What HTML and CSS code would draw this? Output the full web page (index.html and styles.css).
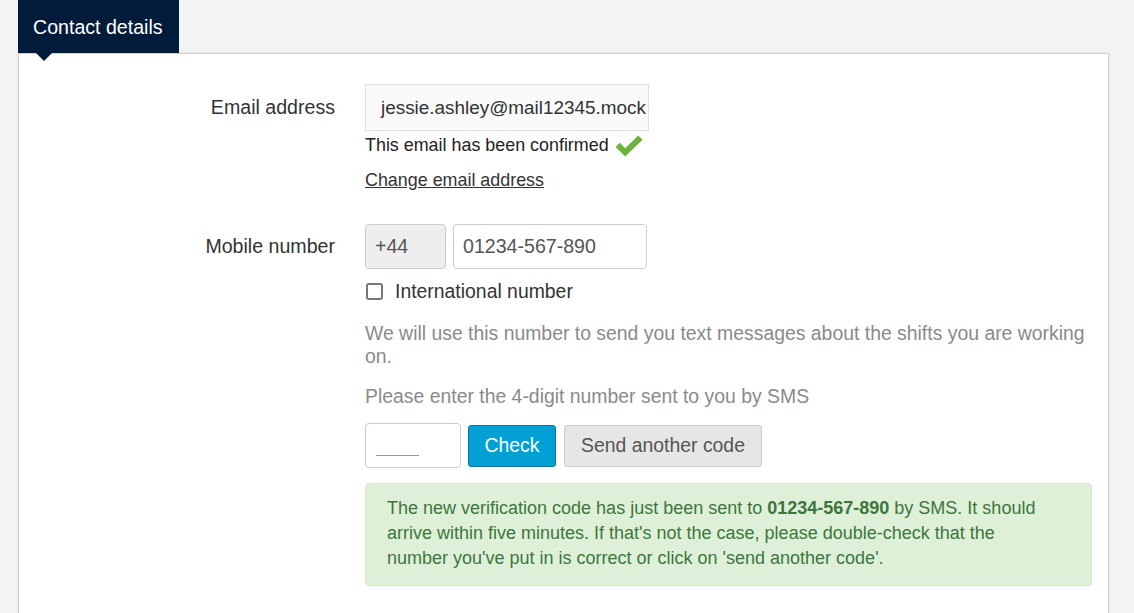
FILE: index.html
```html
<!DOCTYPE html>
<html>
<head>
<meta charset="utf-8">
<link rel="stylesheet" href="styles.css">
</head>
<body>
<div class="page">
  <div class="tabs">
    <div class="tab">Contact details</div>
  </div>
  <div class="panel">
    <div class="form">
      <div class="label label-email">Email address</div>
      <div class="field">
        <div class="readonly">jessie.ashley@mail12345.mock</div>
        <div class="confirmed">This email has been confirmed
          <svg class="check" width="28" height="22" viewBox="0 0 28 22"><path d="M0.5 12 L4.8 7.8 L10.2 13.2 L23.2 0.5 L27.5 4.8 L10.2 21.5 Z" fill="#6cb33e"/></svg>
        </div>
        <a class="change" href="#">Change email address</a>
      </div>

      <div class="label label-mobile">Mobile number</div>
      <div class="field">
        <div class="phone-row">
          <div class="prefix">+44</div>
          <div class="phone">01234-567-890</div>
        </div>
        <label class="intl"><span class="box"></span>International number</label>
        <p class="help">We will use this number to send you text messages about the shifts you are working on.</p>
        <p class="help help-sms">Please enter the 4-digit number sent to you by SMS</p>
        <div class="code-row">
          <div class="code"><span class="placeholder"></span></div>
          <button class="btn btn-primary">Check</button>
          <button class="btn btn-default">Send another code</button>
        </div>
        <div class="alert">The new verification code has just been sent to <b>01234-567-890</b> by SMS. It should arrive within five minutes. If that's not the case, please double-check that the number you've put in is correct or click on 'send another code'.</div>
      </div>
    </div>
  </div>
</div>
</body>
</html>
```

FILE: styles.css
```css
html, body {
  margin: 0;
  padding: 0;
  background: #f2f3f5;
  font-family: "Liberation Sans", Arial, sans-serif;
  color: #333;
  height: 100%;
  overflow: hidden;
}
.page {
  padding-left: 18px;
  padding-right: 25px;
}
.tabs {
  display: flex;
  height: 53px;
}
.tab {
  position: relative;
  background: #011c3b;
  color: #fff;
  font-size: 19.6px;
  padding: 0 15px;
  width: 131px;
  line-height: 54px;
  height: 53px;
  white-space: nowrap;
}
.tab::after {
  content: "";
  position: absolute;
  left: 18px;
  top: 53px;
  border-left: 8px solid transparent;
  border-right: 8px solid transparent;
  border-top: 8px solid #011c3b;
  z-index: 2;
}
.panel {
  background: #fff;
  border: 1px solid #cfcfcf;
  border-bottom: none;
  box-shadow: 0 0 3px rgba(0,0,0,0.08);
  height: 600px;
  padding: 30px 8px 0 0;
}
.form {
  display: grid;
  grid-template-columns: 316px 1fr;
  column-gap: 30px;
  font-size: 19.6px;
}
.label {
  text-align: right;
  color: #333;
}
.label-email { line-height: 47px; }
.label-mobile { line-height: 45px; margin-top: 32px; }
.field {
  display: flex;
  flex-direction: column;
  align-items: flex-start;
}
.readonly {
  height: 45px;
  line-height: 46px;
  padding: 0 2px 0 15px;
  background: #fafafa;
  border: 1px solid #e0e0e0;
  color: #333;
  font-size: 18.9px;
}
.confirmed {
  display: flex;
  align-items: center;
  line-height: 24px;
  margin-top: 2px;
  color: #222;
  font-size: 17.9px;
}
.check { margin-left: 6px; margin-top: 1px; }
.change {
  color: #333;
  text-decoration: underline;
  line-height: 24px;
  margin-top: 11px;
  font-size: 17.9px;
}
.phone-row {
  display: flex;
  gap: 7px;
  margin-top: 32px;
}
.prefix, .phone, .code {
  box-sizing: border-box;
  height: 45px;
  border: 1px solid #ccc;
  border-radius: 4px;
  line-height: 43px;
  padding: 0 9px;
  color: #555;
}
.prefix {
  width: 81px;
  background: #eee;
}
.phone {
  width: 194px;
  background: #fff;
}
.intl {
  display: flex;
  align-items: center;
  margin-top: 10px;
  line-height: 24px;
  color: #333;
  font-size: 19.4px;
}
.box {
  box-sizing: border-box;
  width: 17px;
  height: 17px;
  border: 2px solid #767676;
  border-radius: 3px;
  margin: 0 12px 0 1px;
}
.help {
  margin: 19px 0 0;
  color: #8a8a8a;
  line-height: 23px;
  font-size: 19.4px;
}
.help-sms { margin-top: 17px; }
.code-row {
  display: flex;
  align-items: center;
  gap: 7px;
  margin-top: 15px;
}
.code {
  width: 96px;
  position: relative;
}
.placeholder {
  position: absolute;
  left: 10px;
  top: 31px;
  width: 43px;
  border-top: 1px solid #999;
}
.btn {
  font-family: "Liberation Sans", Arial, sans-serif;
  font-size: 19.4px;
  height: 42px;
  border-radius: 3px;
  padding: 0;
  white-space: nowrap;
  text-align: center;
  cursor: pointer;
}
.btn-primary {
  background: #009fd4;
  border: 1px solid #0a7aa3;
  color: #fff;
  width: 88px;
}
.btn-default {
  background: #e6e6e6;
  border: 1px solid #ccc;
  color: #555;
  width: 198px;
  margin-left: 1px;
}
.alert {
  box-sizing: border-box;
  width: 727px;
  margin-top: 15px;
  background: #dff0d8;
  border: 1px solid #d6e9c6;
  border-radius: 4px;
  color: #3c763d;
  font-size: 18px;
  line-height: 25px;
  padding: 12px 40px 14px 21px;
}
.alert b { font-weight: bold; }
```
